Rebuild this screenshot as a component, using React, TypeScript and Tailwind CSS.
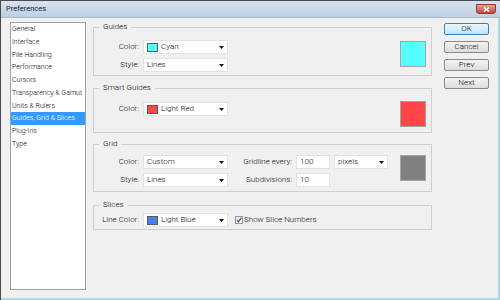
// Photoshop-style Preferences dialog (Guides, Grid & Slices page)
import { ReactNode } from 'react';

const categories = [
  'General',
  'Interface',
  'File Handling',
  'Performance',
  'Cursors',
  'Transparency & Gamut',
  'Units & Rulers',
  'Guides, Grid & Slices',
  'Plug-Ins',
  'Type',
];

const Arrow = () => (
  <svg width="5" height="3" viewBox="0 0 5 3" className="shrink-0">
    <path d="M0 0h5L2.5 3z" fill="#111" />
  </svg>
);

const Select = ({ swatch, label, width = 'w-[85px]' }: { swatch?: string; label: string; width?: string }) => (
  <div className={`${width} h-[14px] shrink-0 bg-white border border-[#e2e2e2] flex items-center pl-[3px] pr-[3px]`}>
    {swatch && (
      <span className="w-[11px] h-[9px] mr-[3px] border border-[#5a5a5a] shrink-0" style={{ backgroundColor: swatch }} />
    )}
    <span className="flex-1 truncate">{label}</span>
    <Arrow />
  </div>
);

const Input = ({ value }: { value: string }) => (
  <div className="w-[34px] h-[14px] shrink-0 bg-white border border-[#e2e2e2] flex items-center pl-[3px]">{value}</div>
);

const Label = ({ children }: { children: ReactNode }) => (
  <div className="w-[45px] mr-[4px] text-right shrink-0">{children}</div>
);

const Swatch = ({ color, className = '' }: { color: string; className?: string }) => (
  <div className={`ml-auto mr-[5px] w-[26px] h-[26px] border border-[#a4a4a4] shrink-0 ${className}`} style={{ backgroundColor: color }} />
);

const Group = ({ title, className, children }: { title: string; className: string; children: ReactNode }) => (
  <fieldset className={`w-[339px] border border-[#cfcfcf] ${className}`}>
    <legend className="ml-[5px] px-[4px] leading-[10px]">{title}</legend>
    {children}
  </fieldset>
);

const Button = ({ children, primary }: { children: ReactNode; primary?: boolean }) => (
  <div
    className={`w-[45px] h-[12px] rounded-[2px] border flex items-center justify-center leading-none ${
      primary
        ? 'border-[#3c7fb1] bg-gradient-to-b from-[#eaf6fd] to-[#bfe4f8]'
        : 'border-[#8a8a8a] bg-gradient-to-b from-[#f4f4f4] to-[#dcdcdc]'
    }`}
  >
    {children}
  </div>
);

export default function App() {
  return (
    <div className="w-[500px] h-[300px] flex flex-col bg-[#f0f0f0] border-l border-t border-[#4a4a4a] font-['Roboto','Liberation_Sans',sans-serif] font-light text-[8px] text-[#0a0a0a] overflow-hidden">
      {/* title bar */}
      <div className="h-[17px] shrink-0 flex items-center bg-gradient-to-b from-[#d6e2ef] to-[#bfd0e3] border-b border-[#a9b8c8] pl-[5px] pr-[4px]">
        <span className="text-[7.5px] font-normal text-[#10213a]">Preferences</span>
        <div className="ml-auto self-start w-[20px] h-[10px] mt-[3px] rounded-b-[3px] border border-[#8d3b31] bg-gradient-to-b from-[#e9a093] to-[#c4473a] flex items-center justify-center">
          <svg width="7" height="5" viewBox="0 0 7 5">
            <path d="M1 0.5l5 4M6 0.5l-5 4" stroke="#fff" strokeWidth="1.4" />
          </svg>
        </div>
      </div>

      {/* body */}
      <div className="flex-1 flex items-start pt-[4px] pl-[9px] border-r-2 border-b-2 border-[#a6dbea]">
        <div className="w-[76px] h-[268px] shrink-0 bg-white border border-[#a3a3a3] text-[7px]">
          {categories.map(c => (
            <div
              key={c}
              className={`h-[12.75px] leading-[12.75px] pl-[1px] whitespace-nowrap ${
                c === 'Guides, Grid & Slices' ? 'bg-[#3399ff] text-white' : ''
              }`}
            >
              {c}
            </div>
          ))}
        </div>

        <div className="ml-[7px] flex flex-col">
          <Group title="Guides" className="pt-[8px] pb-[3px]">
            <div className="flex items-start">
              <div className="flex flex-col gap-[4px]">
                <div className="flex items-center">
                  <Label>Color:</Label>
                  <Select swatch="#55ffff" label="Cyan" />
                </div>
                <div className="flex items-center">
                  <Label>Style:</Label>
                  <Select label="Lines" />
                </div>
              </div>
              <Swatch color="#55ffff" className="mt-[1px]" />
            </div>
          </Group>

          <Group title="Smart Guides" className="mt-[7px] pt-[8px] pb-[5px]">
            <div className="flex items-start">
              <div className="flex items-center mt-[1px]">
                <Label>Color:</Label>
                <Select swatch="#ff4545" label="Light Red" />
              </div>
              <Swatch color="#ff4545" />
            </div>
          </Group>

          <Group title="Grid" className="mt-[6px] pt-[6px] pb-[4px]">
            <div className="flex items-start">
              <div className="flex flex-col gap-[4px]">
                <div className="flex items-center">
                  <Label>Color:</Label>
                  <Select label="Custom" />
                  <div className="w-[64px] text-right mr-[4px]">Gridline every:</div>
                  <Input value="100" />
                  <div className="ml-[4px]">
                    <Select label="pixels" width="w-[54px]" />
                  </div>
                </div>
                <div className="flex items-center">
                  <Label>Style:</Label>
                  <Select label="Lines" />
                  <div className="w-[64px] text-right mr-[4px]">Subdivisions:</div>
                  <Input value="10" />
                </div>
              </div>
              <Swatch color="#808080" />
            </div>
          </Group>

          <Group title="Slices" className="mt-[8px] pt-[3px] pb-[2px]">
            <div className="flex items-center">
              <Label>Line Color:</Label>
              <Select swatch="#4a80ee" label="Light Blue" />
              <div className="ml-[7px] w-[8px] h-[8px] border border-[#8e9aa6] bg-gradient-to-b from-[#e4e8ec] to-[#fbfbfb] flex items-center justify-center">
                <svg width="6" height="6" viewBox="0 0 6 6">
                  <path d="M0.8 3.2L2.4 4.8L5.3 0.9" fill="none" stroke="#3c4a63" strokeWidth="1.1" />
                </svg>
              </div>
              <span className="ml-[1px]">Show Slice Numbers</span>
            </div>
          </Group>
        </div>

        <div className="ml-[12px] mt-[1px] flex flex-col gap-[6px]">
          <Button primary>OK</Button>
          <Button>Cancel</Button>
          <Button>Prev</Button>
          <Button>Next</Button>
        </div>
      </div>
    </div>
  );
}
